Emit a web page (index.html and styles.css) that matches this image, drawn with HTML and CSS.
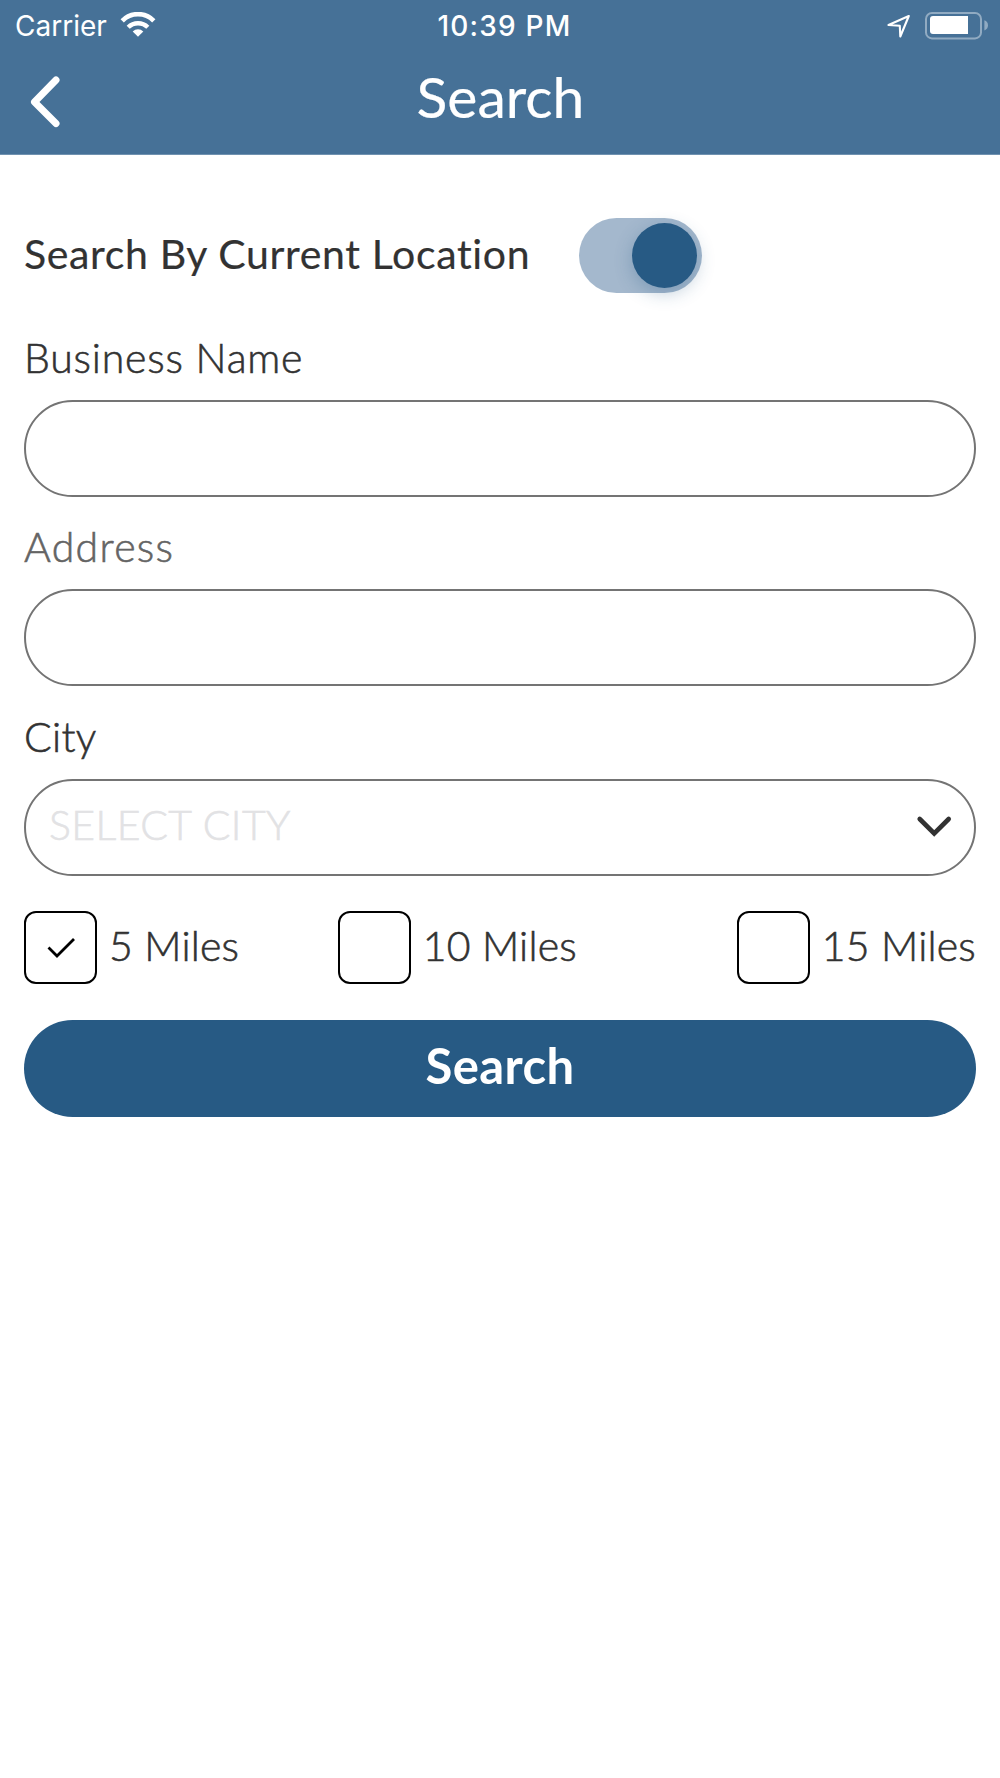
FILE: index.html
```html
<!DOCTYPE html>
<html lang="en">
<head>
  <meta charset="UTF-8">
  <meta name="viewport" content="width=device-width, initial-scale=1.0">
  <title>Search</title>
  <link rel="stylesheet" href="styles.css">
</head>
<body>
  <header>
    <div class="status-bar">
      <div class="status-left">
        <span class="carrier">Carrier</span>
        <svg class="wifi" width="36" height="26" viewBox="0 0 36 26">
          <path d="M2.2 8.8A22 22 0 0 1 33.8 8.8" fill="none" stroke="#fff" stroke-width="4.6"/>
          <path d="M8.2 15.2A14 14 0 0 1 27.8 15.2" fill="none" stroke="#fff" stroke-width="4.4"/>
          <path d="M12.7 19.4A7.8 7.8 0 0 1 23.3 19.4L18 24.8Z" fill="#fff"/>
        </svg>
      </div>
      <span class="clock">10:39 PM</span>
      <div class="status-right">
        <svg class="location" width="24" height="24" viewBox="0 0 24 24">
          <path d="M21.8 2L1.5 11L12.8 11.8L13.3 22.5Z" fill="none" stroke="#fff" stroke-width="2.1" stroke-linejoin="round"/>
        </svg>
        <svg class="battery" width="64" height="28" viewBox="0 0 64 28">
          <rect x="1" y="1" width="55" height="25.4" rx="6" fill="none" stroke="#91abc2" stroke-width="2"/>
          <path d="M8 4H43V22H8Q5 22 5 19V7Q5 4 8 4Z" fill="#fff"/>
          <path d="M59.4 8.3Q63 9.7 63 13.3Q63 17 59.4 18.4Z" fill="#91abc2"/>
        </svg>
      </div>
    </div>
    <div class="nav-bar">
      <button class="back" aria-label="Back">
        <svg width="32" height="52" viewBox="0 0 32 52">
          <path d="M27 4L5.5 26L27 47.5" fill="none" stroke="#fff" stroke-width="7" stroke-linecap="round" stroke-linejoin="round"/>
        </svg>
      </button>
      <h1>Search</h1>
    </div>
  </header>

  <main class="search-form">
    <div class="location-row">
      <span class="location-label">Search By Current Location</span>
      <span class="toggle" role="switch" aria-checked="true"><span class="knob"></span></span>
    </div>

    <div class="field">
      <label class="business" for="business-name">Business Name</label>
      <input type="text" id="business-name">
    </div>
    <div class="field">
      <label class="address" for="address">Address</label>
      <input type="text" id="address">
    </div>
    <div class="field">
      <span class="city">City</span>
      <div class="select">
        <span class="placeholder">SELECT CITY</span>
        <svg width="36" height="24" viewBox="0 0 36 24">
          <path d="M3.7 4L18.2 18.5L32.7 4" fill="none" stroke="#323232" stroke-width="4.6" stroke-linecap="round"/>
        </svg>
      </div>
    </div>

    <div class="miles">
      <div class="option">
        <span class="box">
          <svg width="30" height="24" viewBox="0 0 30 24">
            <path d="M2.5 11.5L11 20L28 3" fill="none" stroke="#000" stroke-width="2.8"/>
          </svg>
        </span>
        <span class="text">5 Miles</span>
      </div>
      <div class="option"><span class="box"></span><span class="text">10 Miles</span></div>
      <div class="option"><span class="box"></span><span class="text">15 Miles</span></div>
    </div>

    <button class="submit">Search</button>
  </main>
</body>
</html>
```
FILE: styles.css
```css
* {
  box-sizing: border-box;
}
body {
  margin: 0;
  background-color: #fff;
  color: #323232;
  font-family: Lato, "Liberation Sans", sans-serif;
}
header {
  height: 155px;
  border-bottom: 1px solid #7092b0;
  background-color: #467197;
  color: #fff;
}
/* status bar */
.status-bar {
  display: grid;
  grid-template-columns: 1fr auto 1fr;
  height: 51px;
  padding: 0 11px 0 15px;
  align-items: center;
  font-family: Inter, sans-serif;
  font-size: 28px;
}
.status-left, .status-right {
  display: flex;
  align-items: center;
}
.status-left {
  gap: 13px;
}
.wifi {
  margin-bottom: 2px;
}
.status-right {
  justify-content: flex-end;
  gap: 14px;
}
.clock {
  padding-left: 5px;
  font-weight: 500;
  letter-spacing: 1.2px;
}
/* title row */
.nav-bar {
  display: grid;
  grid-template-columns: 80px 1fr 80px;
  height: 102px;
  align-items: center;
}
.back {
  display: flex;
  padding: 0 0 0 29px;
  border: none;
  background: none;
}
h1 {
  margin: 0;
  padding: 0 0 13px 1px;
  font-size: 57px;
  font-weight: 400;
  line-height: 68px;
  text-align: center;
  -webkit-text-stroke: 0.2px;
}
/* form */
.search-form {
  padding: 63px 24px 0;
  font-size: 41px;
  font-weight: 300;
  -webkit-text-stroke: 0.6px;
}
.location-row {
  display: flex;
  align-items: center;
  gap: 49px;
  height: 75px;
}
.location-label {
  width: 506px;
  padding-bottom: 4px;
  font-weight: 400;
  letter-spacing: 0.65px;
  white-space: nowrap;
  -webkit-text-stroke: 0.2px;
}
.toggle {
  display: flex;
  justify-content: flex-end;
  width: 123px;
  height: 75px;
  padding: 5px;
  border-radius: 38px;
  background-color: #a4b8cd;
}
.knob {
  width: 65px;
  height: 65px;
  border-radius: 50%;
  background-color: #275a84;
  box-shadow: 0 5px 18px rgba(39, 90, 132, 0.3);
}
.field {
  display: flex;
  flex-direction: column;
  margin-top: 30.4px;
}
.location-row + .field {
  margin-top: 45px;
}
.field label, .city {
  height: 39px;
  margin-bottom: 23px;
  line-height: 39px;
}
.field input, .select {
  width: 100%;
  height: 97px;
  border: 2px solid #747474;
  border-radius: 49px;
  background-color: #fff;
}
.business {
  letter-spacing: 0.8px;
}
.address {
  color: #646464;
  letter-spacing: 1.3px;
}
.city {
  letter-spacing: 0.3px;
}
.select {
  display: flex;
  align-items: center;
  justify-content: space-between;
  padding: 0 22px;
}
.placeholder {
  padding: 0 0 6px 1px;
  color: #e2e2e4;
  letter-spacing: 0.4px;
}
/* distance options */
.miles {
  display: flex;
  margin-top: 35.2px;
}
.option {
  display: flex;
  align-items: center;
  gap: 12px;
}
.option + .option {
  margin-left: 98.5px;
}
.option:last-child {
  margin-left: auto;
}
.option .text {
  padding-bottom: 3px;
  letter-spacing: 0.2px;
}
.box {
  display: flex;
  align-items: center;
  justify-content: center;
  width: 73px;
  height: 73px;
  border: 2px solid #000;
  border-radius: 12px;
}
.box svg {
  margin-top: 2px;
}
.submit {
  width: 100%;
  height: 97px;
  margin-top: 36px;
  padding: 0 0 6px;
  border: none;
  border-radius: 49px;
  background-color: #275a84;
  color: #fff;
  font-family: inherit;
  font-size: 49px;
  font-weight: 700;
  letter-spacing: 0.4px;
  -webkit-text-stroke: 0;
}
```
